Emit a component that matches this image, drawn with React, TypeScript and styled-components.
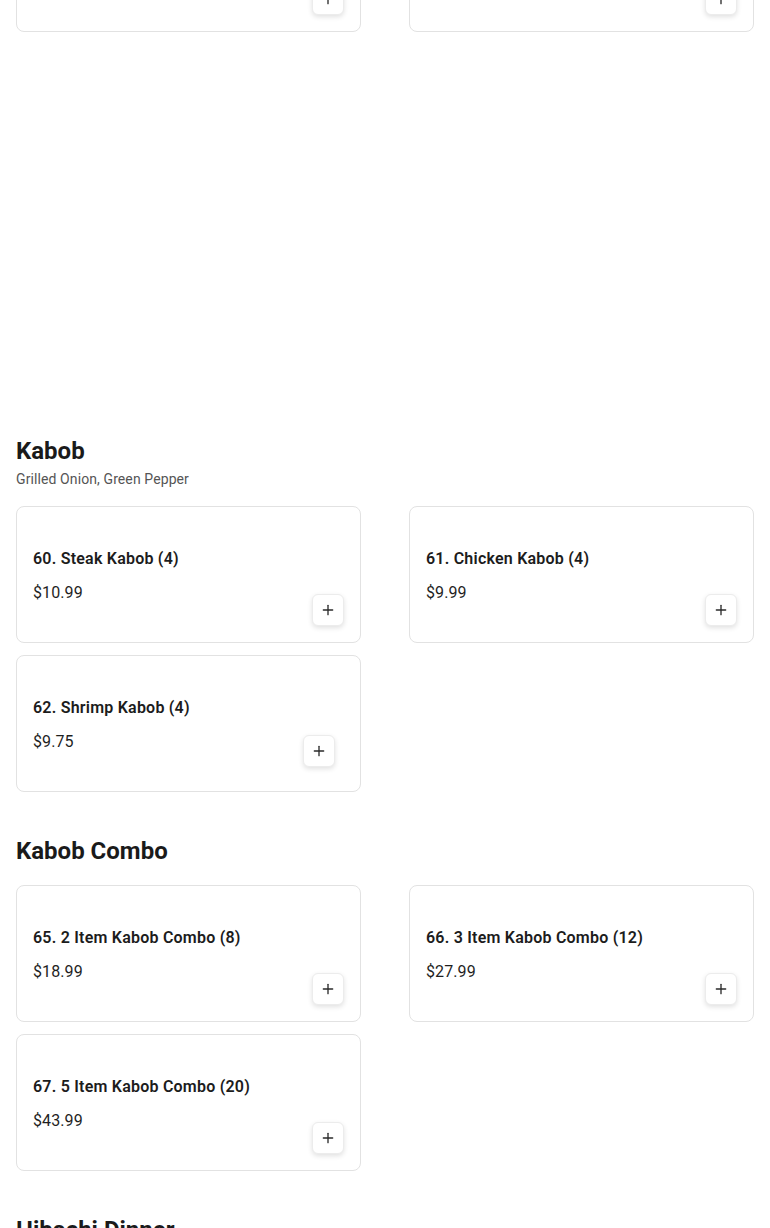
import React from 'react';
import styled, { createGlobalStyle } from 'styled-components';
import { Plus } from 'lucide-react';

const GlobalStyle = createGlobalStyle`
  html, body {
    margin: 0;
    padding: 0;
    background: #fff;
    font-family: Roboto, "Liberation Sans", Arial, sans-serif;
    color: #1c1c1c;
    overflow: hidden;
  }
  * { box-sizing: border-box; }
`;

// the page is shown scrolled down a little, so the first row sits above the top edge
const Page = styled.main`
  display: flex;
  flex-direction: column;
  gap: 45px;
  padding: 0 16px;
  margin-top: -105px;
`;

const Section = styled.section`
  display: flex;
  flex-direction: column;
`;

const Header = styled.header<{ $withNote?: boolean }>`
  display: flex;
  flex-direction: column;
  margin-bottom: ${p => (p.$withNote ? 17 : 20)}px;
`;

const SectionTitle = styled.h2`
  margin: 0;
  font-size: 24px;
  line-height: 28px;
  font-weight: 700;
  color: #1a1a1a;
`;

const SectionNote = styled.p`
  margin: 4px 0 0;
  font-size: 14px;
  line-height: 20px;
  letter-spacing: 0.1px;
  color: #555;
`;

const Blank = styled.div<{ $height: number }>`
  height: ${p => p.$height}px;
`;

const Grid = styled.div`
  display: grid;
  grid-template-columns: 1fr 1fr;
  column-gap: 48px;
  row-gap: 12px;
`;

const Card = styled.article`
  display: flex;
  justify-content: space-between;
  height: 137px;
  padding: 40px 16px 16px;
  border: 1px solid #e2e2e2;
  border-radius: 8px;
  background: #fff;
`;

const Info = styled.div`
  display: flex;
  flex-direction: column;
  align-self: flex-start;
`;

const ItemName = styled.h3`
  margin: 0;
  font-size: 16px;
  line-height: 24px;
  font-weight: 600;
  letter-spacing: 0.22px;
  color: #1c1c1c;
`;

const Price = styled.span`
  margin-top: 10px;
  font-size: 16px;
  line-height: 24px;
  font-weight: 400;
  letter-spacing: 0.1px;
  color: #1f1f1f;
`;

const AddButton = styled.button<{ $inset?: boolean }>`
  align-self: flex-end;
  flex-shrink: 0;
  display: flex;
  align-items: center;
  justify-content: center;
  width: 32px;
  height: 32px;
  padding: 0;
  margin: ${p => (p.$inset ? '0 9px 8px 0' : '0')};
  border: 1px solid #ececec;
  border-radius: 6px;
  background: #fff;
  color: #2a2a2a;
  box-shadow: 0 2px 5px rgba(0, 0, 0, 0.12);
  cursor: pointer;
`;

interface Item {
  name: string;
  price: string;
  inset?: boolean;
}

interface Category {
  title?: string;
  note?: string;
  items: Item[];
}

const menu: Category[] = [
  {
    items: [
      { name: '58. Hibachi Shrimp', price: '$11.99' },
      { name: '59. Hibachi Scallop', price: '$13.99' },
    ],
  },
  {
    title: 'Kabob',
    note: 'Grilled Onion, Green Pepper',
    items: [
      { name: '60. Steak Kabob (4)', price: '$10.99' },
      { name: '61. Chicken Kabob (4)', price: '$9.99' },
      { name: '62. Shrimp Kabob (4)', price: '$9.75', inset: true },
    ],
  },
  {
    title: 'Kabob Combo',
    items: [
      { name: '65. 2 Item Kabob Combo (8)', price: '$18.99' },
      { name: '66. 3 Item Kabob Combo (12)', price: '$27.99' },
      { name: '67. 5 Item Kabob Combo (20)', price: '$43.99' },
    ],
  },
  {
    title: 'Hibachi Dinner',
    items: [
      { name: '70. Chicken Hibachi', price: '$13.99' },
      { name: '71. Steak Hibachi', price: '$16.99' },
    ],
  },
];

const MenuCard: React.FC<{ item: Item }> = ({ item }) => (
  <Card>
    <Info>
      <ItemName>{item.name}</ItemName>
      <Price>{item.price}</Price>
    </Info>
    <AddButton $inset={item.inset} aria-label={`Add ${item.name}`}>
      <Plus size={16} strokeWidth={2} />
    </AddButton>
  </Card>
);

const App: React.FC = () => (
  <>
    <GlobalStyle />
    <Page>
      {menu.map((cat, i) => (
        <React.Fragment key={i}>
          <Section>
            {cat.title && (
              <Header $withNote={!!cat.note}>
                <SectionTitle>{cat.title}</SectionTitle>
                {cat.note && <SectionNote>{cat.note}</SectionNote>}
              </Header>
            )}
            <Grid>
              {cat.items.map(item => (
                <MenuCard key={item.name} item={item} />
              ))}
            </Grid>
          </Section>
          {/* empty block below the first row, nothing drawn in it */}
          {i === 0 && <Blank $height={315} />}
        </React.Fragment>
      ))}
    </Page>
  </>
);

export default App;
